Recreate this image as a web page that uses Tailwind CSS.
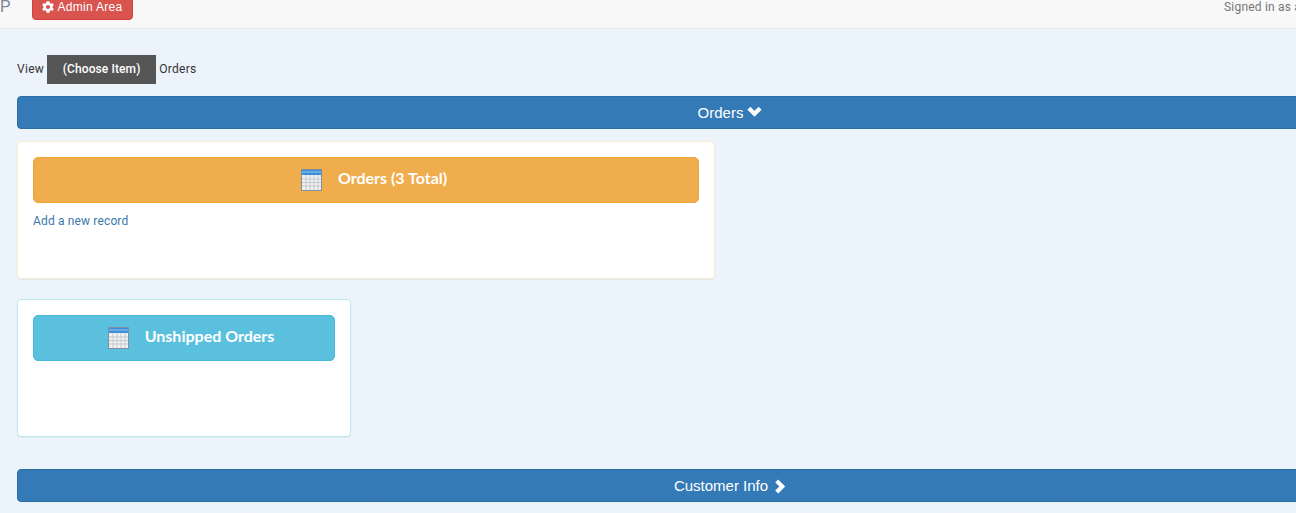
<!DOCTYPE html>
<html lang="en">
<head>
<meta charset="utf-8">
<title>Orders</title>
<script src="https://cdn.jsdelivr.net/npm/@tailwindcss/browser@4"></script>
</head>
<body class="h-[513px] w-[1296px] overflow-hidden bg-[#ecf3fb] bg-[repeating-linear-gradient(135deg,#ecf3fb_0px,#ecf3fb_3px,#ebf3fb_3px,#ebf3fb_6px)] font-['Roboto',sans-serif] text-[12px] tracking-[0.3px] text-[#333]">
<header class="flex h-[29px] items-start border-b border-[#e7e7e7] bg-[#f8f8f8]">
  <span class="mt-[-3px] w-[32px] shrink-0 font-['Liberation_Sans',sans-serif] text-[16px] leading-[20px] tracking-normal text-[#7a8a99]">P</span>
  <a class="mt-[-8px] flex h-[28px] w-[101px] shrink-0 items-center justify-center gap-[3px] rounded-[4px] border border-[#d43f3a] bg-[#d9534f] pt-[1px] font-['Liberation_Sans',sans-serif] text-[12px] tracking-[0.3px] whitespace-nowrap text-white">
    <svg class="h-[12px] w-[12px] fill-white" viewBox="2 2 20 20"><path d="M19.4 13a7.6 7.6 0 0 0 0-2l2.3-1.8-2.2-3.800-2.800 1.100a7.600 7.600 0 0 0-1.700-1L14.500 2.500h-5L9 5.500a7.600 7.600 0 0 0-1.700 1L4.500 5.400 2.300 9.200 4.600 11a7.600 7.600 0 0 0 0 2l-2.300 1.800 2.200 3.800 2.800-1.100a7.600 7.600 0 0 0 1.700 1l.5 3h5l.5-3a7.600 7.600 0 0 0 1.700-1l2.800 1.100 2.200-3.800zM12 15.500a3.500 3.500 0 1 1 0-7 3.500 3.500 0 0 1 0 7z"/></svg>
    Admin Area
  </a>
  <span class="mt-[-1px] ml-[1091px] shrink-0 text-[12px] leading-[16px] tracking-[0.2px] whitespace-nowrap text-[#777]">Signed in as admin</span>
</header>
<main class="w-[1443px] pl-[17px]">
  <div class="mt-[26px] flex h-[29px] items-center leading-[29px]">
    <span class="self-start">View</span>
    <span class="ml-[3px] flex h-[29px] w-[109px] items-center justify-center bg-[#555] pb-[1px] text-[12px] font-medium tracking-[0.1px] text-white">(Choose Item)</span>
    <span class="ml-[3px] self-start">Orders</span>
  </div>
  <div class="mt-[12px] flex h-[33px] items-center justify-center gap-[4px] rounded-[4px] border border-[#2e6da4] bg-[#337ab7] pt-[1px] font-['Liberation_Sans',sans-serif] text-[15px] tracking-normal text-white">
    Orders
    <svg class="mb-[3px] h-[15px] w-[15px] fill-none stroke-white stroke-[4.5]" viewBox="0 0 16 16"><path d="M2 4.500l6 6 6-6"/></svg>
  </div>
  <section class="mt-[12px] h-[138px] w-[698px] rounded-[4px] border border-[#faebcc] bg-white p-[15px] shadow-[0_1px_1px_rgba(0,0,0,0.05)]">
    <div class="flex h-[46px] items-center justify-center gap-[16px] rounded-[5px] border border-[#eea236] bg-[#f0ad4e] pb-[4px] pl-[16px] font-['Lato',sans-serif] text-[16px] font-bold tracking-normal text-white">
      <svg class="mt-[4px] h-[22px] w-[21px]" viewBox="0 0 21 22"><rect x="0.500" y="0.500" width="20" height="21" fill="#eef0f2" stroke="#7f8f9f"/><rect x="1" y="1" width="19" height="5" fill="#3f8fd8"/><path d="M1 3h19" stroke="#8fc4f0"/><path d="M5 6v15M9 6v15M13 6v15M17 6v15M1 10h19M1 13.500h19M1 17h19" stroke="#c5c9cd"/></svg>
      <span>Orders (3 Total)</span>
    </div>
    <a class="mt-[11px] block text-[12px] leading-[14px] tracking-[0.15px] text-[#3a78ad]">Add a new record</a>
  </section>
  <section class="mt-[20px] h-[138px] w-[334px] rounded-[4px] border border-[#bce8f1] bg-white p-[15px] shadow-[0_1px_1px_rgba(0,0,0,0.05)]">
    <div class="flex h-[46px] items-center justify-center gap-[16px] rounded-[5px] border border-[#46b8da] bg-[#5bc0de] pb-[4px] pl-[14px] font-['Lato',sans-serif] text-[16px] font-bold tracking-normal text-white">
      <svg class="mt-[4px] h-[22px] w-[21px]" viewBox="0 0 21 22"><rect x="0.500" y="0.500" width="20" height="21" fill="#eef0f2" stroke="#7f8f9f"/><rect x="1" y="1" width="19" height="5" fill="#3f8fd8"/><path d="M1 3h19" stroke="#8fc4f0"/><path d="M5 6v15M9 6v15M13 6v15M17 6v15M1 10h19M1 13.500h19M1 17h19" stroke="#c5c9cd"/></svg>
      <span>Unshipped Orders</span>
    </div>
  </section>
  <div class="mt-[32px] flex h-[33px] items-center justify-center gap-[5px] rounded-[4px] border border-[#2e6da4] bg-[#337ab7] pt-[1px] font-['Liberation_Sans',sans-serif] text-[15px] tracking-normal text-white">
    Customer Info
    <svg class="h-[15px] w-[13px] fill-none stroke-white stroke-[4.5]" viewBox="0 0 14 16"><path d="M4 2l6 6-6 6"/></svg>
  </div>
</main>
</body>
</html>
